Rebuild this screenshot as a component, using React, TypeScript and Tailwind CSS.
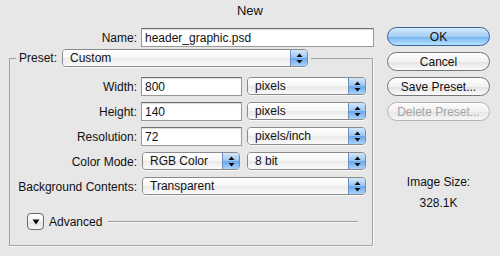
import React from "react"

function Arrows() {
  return (
    <svg width="7" height="11" viewBox="0 0 7 11">
      <path d="M3.5 0.5 L6.5 4 L0.5 4 Z" fill="#0b0b0b" />
      <path d="M0.5 7 L6.5 7 L3.5 10.5 Z" fill="#0b0b0b" />
    </svg>
  )
}

function Popup({ value, w }: { value: string; w: string }) {
  return (
    <div className={`${w} h-[18px] flex rounded-[4px] border border-[#8a8a8a] overflow-hidden shadow-[0_1px_0_rgba(255,255,255,0.7)]`}>
      <div className="flex-1 pl-[7px] flex items-center leading-none bg-[linear-gradient(to_bottom,#ffffff,#f6f6f6_50%,#e9e9e9_51%,#fafafa)]">
        {value}
      </div>
      <div className="w-[17px] flex items-center justify-center border-l border-[#6d8fc0] bg-[linear-gradient(to_bottom,#d3e7fb,#98c5f2_50%,#68a7ec_51%,#a9d4fb)]">
        <Arrows />
      </div>
    </div>
  )
}

function TextInput({ value, w }: { value: string; w: string }) {
  return (
    <div className={`${w} h-[19px] flex items-center pl-[3px] leading-none bg-white border border-[#999999] border-t-[#707070] shadow-[inset_0_1px_1px_rgba(0,0,0,0.15)]`}>
      {value}
    </div>
  )
}

function AquaButton({ label, kind }: { label: string; kind?: "default" | "disabled" }) {
  if (kind === "default") {
    return (
      <div className="h-[19px] rounded-full flex items-center justify-center leading-none border border-[#3d6499] bg-[linear-gradient(to_bottom,#d6e9fb,#a3cdf4_50%,#72b3ef_51%,#b9e2ff)]">
        {label}
      </div>
    )
  }
  if (kind === "disabled") {
    return (
      <div className="h-[19px] rounded-full flex items-center justify-center leading-none border border-[#b4b4b4] text-[#a3a3a3] bg-[linear-gradient(to_bottom,#fbfbfb,#f1f1f1_50%,#e6e6e6_51%,#f6f6f6)]">
        {label}
      </div>
    )
  }
  return (
    <div className="h-[19px] rounded-full flex items-center justify-center leading-none border border-[#767676] bg-[linear-gradient(to_bottom,#ffffff,#f3f3f3_50%,#e2e2e2_51%,#fbfbfb)]">
      {label}
    </div>
  )
}

function Row({ label, children }: { label: string; children: React.ReactNode }) {
  return (
    <div className="h-[20px] flex items-start">
      <div className="w-[127px] h-[19px] flex items-center justify-end leading-none">{label}</div>
      {children}
    </div>
  )
}

export default function App() {
  return (
    <div className="w-[500px] h-[256px] bg-[#e7e7e7] text-[12px] text-[#111] font-['Liberation_Sans',Arial,sans-serif] overflow-hidden">
      <div className="h-[20px] flex items-center justify-center text-[13px] pt-[1px]">New</div>

      <div className="flex">
        {/* left side: name + preset group */}
        <div className="w-[380px]">
          <div className="mt-[8px] flex items-center">
            <div className="w-[137px] text-right leading-none">Name:</div>
            <div className="ml-[4px]">
              <TextInput value="header_graphic.psd" w="w-[233px]" />
            </div>
          </div>

          <fieldset className="ml-[9px] mt-[2px] w-[364px] h-[197px] border border-[#a3a3a3] shadow-[1px_1px_0_#fafafa]">
            <legend className="ml-[6px] px-[3px] flex items-center">
              <span className="leading-none">Preset:</span>
              <div className="ml-[5px]">
                <Popup value="Custom" w="w-[246px]" />
              </div>
            </legend>

            <div className="mt-[10px] flex flex-col gap-[5px]">
              <Row label="Width:">
                <div className="ml-[4px]"><TextInput value="800" w="w-[101px]" /></div>
                <div className="ml-[5px]"><Popup value="pixels" w="w-[119px]" /></div>
              </Row>
              <Row label="Height:">
                <div className="ml-[4px]"><TextInput value="140" w="w-[101px]" /></div>
                <div className="ml-[5px]"><Popup value="pixels" w="w-[119px]" /></div>
              </Row>
              <Row label="Resolution:">
                <div className="ml-[4px]"><TextInput value="72" w="w-[101px]" /></div>
                <div className="ml-[5px]"><Popup value="pixels/inch" w="w-[119px]" /></div>
              </Row>
              <Row label="Color Mode:">
                <div className="ml-[5px]"><Popup value="RGB Color" w="w-[98px]" /></div>
                <div className="ml-[7px]"><Popup value="8 bit" w="w-[119px]" /></div>
              </Row>
              <Row label="Background Contents:">
                <div className="ml-[5px]"><Popup value="Transparent" w="w-[224px]" /></div>
              </Row>
            </div>

            <div className="mt-[16px] flex items-center">
              <div className="ml-[17px] w-[17px] h-[17px] rounded-[4px] border border-[#6a6a6a] flex items-center justify-center bg-[linear-gradient(to_bottom,#ffffff,#f1f1f1_50%,#e0e0e0_51%,#f7f7f7)]">
                <svg width="8" height="6" viewBox="0 0 8 6">
                  <path d="M0.5 0.5 L7.5 0.5 L4 5.5 Z" fill="#0b0b0b" />
                </svg>
              </div>
              <span className="ml-[5px] leading-none">Advanced</span>
              <div className="ml-[6px] mr-[14px] flex-1 h-px bg-[#9c9c9c] shadow-[0_1px_0_#f7f7f7]" />
            </div>
          </fieldset>
        </div>

        {/* right side: buttons */}
        <div className="ml-[7px] w-[103px] pt-[7px]">
          <div className="flex flex-col gap-[6px]">
            <AquaButton label="OK" kind="default" />
            <AquaButton label="Cancel" />
            <AquaButton label="Save Preset..." />
            <AquaButton label="Delete Preset..." kind="disabled" />
          </div>
          <div className="mt-[55px] text-center leading-none">Image Size:</div>
          <div className="mt-[9px] text-center leading-none">328.1K</div>
        </div>
      </div>
    </div>
  )
}
